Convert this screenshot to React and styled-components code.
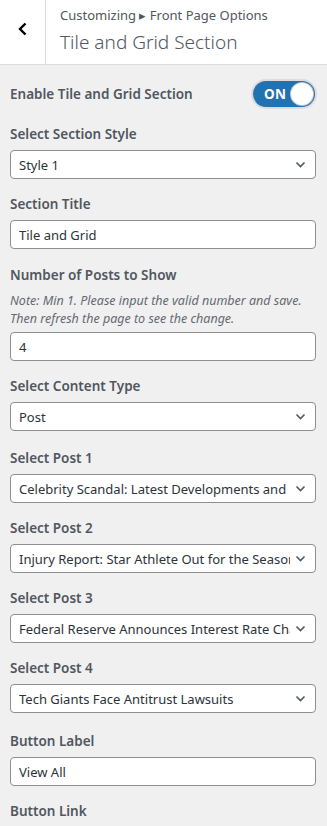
import React from 'react';
import styled, { createGlobalStyle } from 'styled-components';

const GlobalStyle = createGlobalStyle`
  html, body {
    margin: 0;
    padding: 0;
    background: #f0f0f1;
  }
  body {
    font-family: "Noto Sans", "Open Sans", sans-serif;
    color: #50575e;
  }
  * { box-sizing: border-box; }
`;

const Panel = styled.div`
  width: 327px;
  min-height: 826px;
  background: #f0f0f1;
  overflow: hidden;
`;

const Header = styled.div`
  display: flex;
  height: 65px;
  background: #fff;
  border-bottom: 1px solid #dcdcde;
`;

const BackButton = styled.button`
  width: 46px;
  flex: 0 0 46px;
  border: none;
  border-right: 1px solid #dcdcde;
  background: #fff;
  padding: 0 0 6px 0;
  display: flex;
  align-items: center;
  justify-content: center;
  cursor: pointer;
`;

const HeaderText = styled.div`
  display: flex;
  flex-direction: column;
  padding: 5px 0 0 14px;
`;

const Crumb = styled.span`
  font-size: 13px;
  line-height: 20px;
  color: #50575e;
`;

const Title = styled.h3`
  margin: 3px 0 0;
  font-size: 19px;
  line-height: 28px;
  font-weight: 300;
  color: #50575e;
`;

const Body = styled.div`
  padding: 16px 11px 0 10px;
  display: flex;
  flex-direction: column;
`;

const Control = styled.div`
  display: flex;
  flex-direction: column;
  margin-bottom: ${(p) => p.$mb ?? 15}px;
`;

const ToggleRow = styled.div`
  display: flex;
  align-items: center;
  justify-content: space-between;
  margin-bottom: 17px;
`;

const Label = styled.span`
  font-size: 13.5px;
  font-weight: 600;
  line-height: 20px;
  color: #50575e;
  margin-bottom: ${(p) => p.$mb ?? 6}px;
`;

const Note = styled.span`
  font-size: 12.5px;
  font-style: italic;
  line-height: 18px;
  color: #646970;
  margin-bottom: 4px;
`;

const Switch = styled.div`
  width: 62px;
  height: 26px;
  border-radius: 13px;
  background: #2271b1;
  box-shadow: 0 0 0 2px #dcdcde;
  display: flex;
  align-items: center;
  justify-content: space-between;
  padding: 0 2px 0 11px;
  margin-right: 1px;
`;

const SwitchText = styled.span`
  color: #fff;
  font-size: 13.5px;
  font-weight: 700;
  letter-spacing: 0.2px;
`;

const Knob = styled.span`
  width: 22px;
  height: 22px;
  border-radius: 50%;
  background: #fff;
  box-shadow: 0 0 0 1px #c3c4c7;
`;

const Field = styled.div`
  height: 29px;
  background: #fff;
  border: 1px solid #8c8f94;
  border-radius: 4px;
  display: flex;
  align-items: center;
  gap: 5px;
  padding: 0 9px 0 8px;
  font-size: 13px;
  color: #2c3338;
`;

const Value = styled.span`
  flex: 1;
  min-width: 0;
  white-space: nowrap;
  overflow: hidden;
`;

const Chevron = styled.svg`
  flex: 0 0 auto;
`;

const Select = ({ value }) => (
  <Field>
    <Value>{value}</Value>
    <Chevron width="11" height="9" viewBox="0 0 11 9">
      <path d="M1.5 2.5 L5.5 6.5 L9.5 2.5" fill="none" stroke="#50575e" strokeWidth="1.6" />
    </Chevron>
  </Field>
);

const posts = [
  'Celebrity Scandal: Latest Developments and Reactions',
  'Injury Report: Star Athlete Out for the Season',
  'Federal Reserve Announces Interest Rate Changes',
  'Tech Giants Face Antitrust Lawsuits',
];

export default function App() {
  return (
    <Panel>
      <GlobalStyle />
      <Header>
        <BackButton>
          <svg width="12" height="14" viewBox="0 0 12 14">
            <path d="M8.5 1.5 L3 7 L8.5 12.5" fill="none" stroke="#000" strokeWidth="2.4" />
          </svg>
        </BackButton>
        <HeaderText>
          <Crumb>Customizing ▸ Front Page Options</Crumb>
          <Title>Tile and Grid Section</Title>
        </HeaderText>
      </Header>
      <Body>
        <ToggleRow>
          <Label $mb={0}>Enable Tile and Grid Section</Label>
          <Switch>
            <SwitchText>ON</SwitchText>
            <Knob />
          </Switch>
        </ToggleRow>
        <Control>
          <Label>Select Section Style</Label>
          <Select value="Style 1" />
        </Control>
        <Control $mb={16}>
          <Label>Section Title</Label>
          <Field>
            <Value>Tile and Grid</Value>
          </Field>
        </Control>
        <Control>
          <Label $mb={7}>Number of Posts to Show</Label>
          <Note>
            Note: Min 1. Please input the valid number and save. Then refresh the page to see the change.
          </Note>
          <Field>
            <Value>4</Value>
          </Field>
        </Control>
        <Control $mb={17}>
          <Label>Select Content Type</Label>
          <Select value="Post" />
        </Control>
        {posts.map((p, i) => (
          <Control key={p} $mb={i === posts.length - 1 ? 18 : 15}>
            <Label>Select Post {i + 1}</Label>
            <Select value={p} />
          </Control>
        ))}
        <Control>
          <Label>Button Label</Label>
          <Field>
            <Value>View All</Value>
          </Field>
        </Control>
        <Control>
          <Label>Button Link</Label>
        </Control>
      </Body>
    </Panel>
  );
}
